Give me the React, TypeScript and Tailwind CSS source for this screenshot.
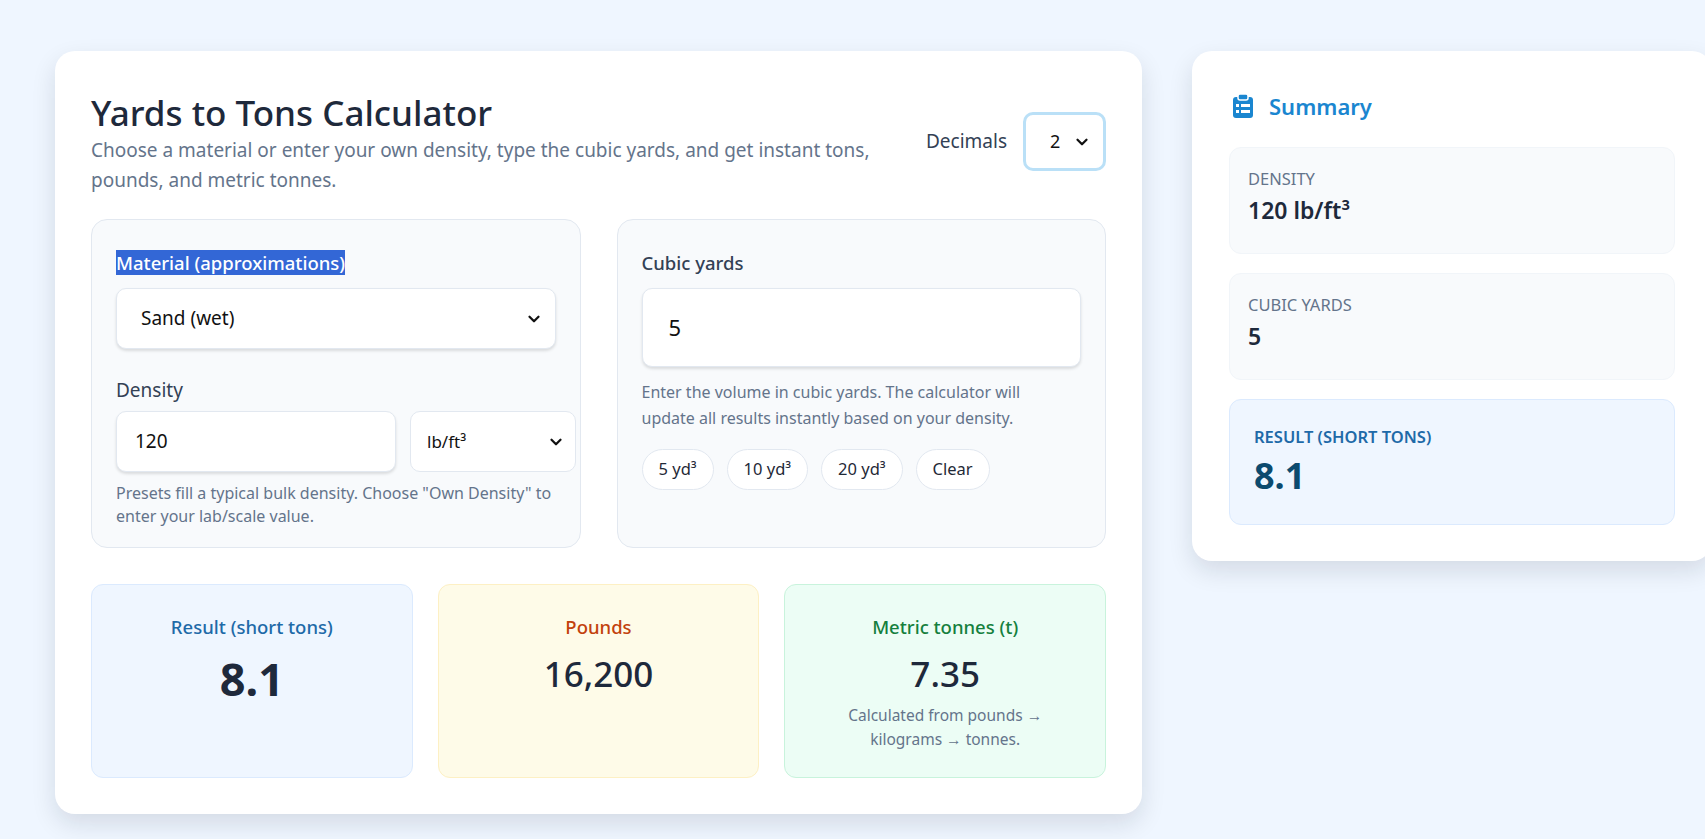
import React from "react";

const Chev = () => (
  <svg width="18" height="18" viewBox="0 0 24 24" fill="none" stroke="#111" strokeWidth="3" strokeLinecap="round" strokeLinejoin="round"><path d="M6 9l6 6 6-6" /></svg>
);

export default function App() {
  const chip = "h-[41px] px-4 rounded-full border border-[#e2e8f0] bg-white text-[16.5px] text-[#1f2937] flex items-center";
  return (
    <div className="w-[1705px] h-[839px] overflow-hidden bg-[#eff6ff] flex items-start pt-[51px] pl-[55px] gap-[50px]" style={{ fontFamily: '"Noto Sans","Open Sans",sans-serif' }}>
      <div className="w-[1087px] h-[763px] shrink-0 bg-white rounded-[20px] shadow-[0_10px_25px_rgba(15,23,42,0.12)] px-[36px] pt-[40px]">
        <div className="flex justify-between">
          <div>
            <h1 className="text-[35px] font-medium text-[#1e293b] leading-[44px]">Yards to Tons Calculator</h1>
            <p className="text-[19px] text-[#64748b] leading-[30px] w-[810px]">Choose a material or enter your own density, type the cubic yards, and get instant tons, pounds, and metric tonnes.</p>
          </div>
          <div className="flex items-center gap-4 mt-[21px] h-[59px]">
            <span className="text-[19px] text-[#334155]">Decimals</span>
            <div className="w-[83px] h-[59px] rounded-[10px] border-[3px] border-[#bae0f7] bg-white flex items-center justify-between px-[24px] pr-[12px]">
              <span className="text-[18px] text-[#111]">2</span><Chev />
            </div>
          </div>
        </div>
        <div className="grid grid-cols-2 gap-[36px] mt-[24px]">
          <div className="h-[329px] rounded-[16px] border border-[#e2e8f0] bg-[#f8fafc] pl-[24px] pr-[4px] pt-[30px]">
            <div className="text-[18.5px] font-medium leading-[26px]"><span className="bg-[#3367d6] text-white">Material (approximations)</span></div>
            <div className="mt-[12px] w-[440px] h-[61px] bg-white rounded-[10px] border border-[#e2e8f0] shadow-[0_2px_3px_rgba(0,0,0,0.12)] flex items-center justify-between pl-[24px] pr-[12px]">
              <span className="text-[19px] text-[#111]">Sand (wet)</span><Chev />
            </div>
            <div className="mt-[28px] text-[19px] text-[#334155] leading-[26px]">Density</div>
            <div className="flex gap-[14px] mt-[8px]">
              <div className="w-[281px] h-[61px] bg-white rounded-[10px] border border-[#e2e8f0] shadow-[0_2px_3px_rgba(0,0,0,0.12)] flex items-center pl-[18px] text-[19px] text-[#111]">120</div>
              <div className="w-[166px] h-[61px] bg-white rounded-[10px] border border-[#e2e8f0] flex items-center justify-between pl-[16px] pr-[10px]">
                <span className="text-[17px] text-[#111]">lb/ft³</span><Chev />
              </div>
            </div>
            <p className="mt-[10px] text-[16px] text-[#64748b] leading-[23px] w-[440px]">Presets fill a typical bulk density. Choose "Own Density" to enter your lab/scale value.</p>
          </div>
          <div className="h-[329px] rounded-[16px] border border-[#e2e8f0] bg-[#f8fafc] px-[24px] pt-[30px]">
            <div className="text-[18.5px] font-medium text-[#334155] leading-[26px]">Cubic yards</div>
            <div className="mt-[12px] h-[79px] bg-white rounded-[10px] border border-[#e2e8f0] shadow-[0_2px_3px_rgba(0,0,0,0.12)] flex items-center pl-[26px] text-[22px] text-[#111]">5</div>
            <p className="mt-[12px] text-[16px] text-[#64748b] leading-[26px] w-[410px]">Enter the volume in cubic yards. The calculator will update all results instantly based on your density.</p>
            <div className="flex gap-[13px] mt-[18px]">
              <div className={chip}>5 yd³</div>
              <div className={chip}>10 yd³</div>
              <div className={chip}>20 yd³</div>
              <div className={chip}>Clear</div>
            </div>
          </div>
        </div>
        <div className="grid grid-cols-3 gap-[25px] mt-[36px]">
          <div className="h-[194px] rounded-[12px] border border-[#dbeafe] bg-[#eff6ff] flex flex-col items-center pt-[28px]">
            <div className="text-[18.5px] font-medium text-[#1e6aa8]">Result (short tons)</div>
            <div className="text-[45px] font-bold text-[#1e293b] leading-[60px] mt-[8px]">8.1</div>
          </div>
          <div className="h-[194px] rounded-[12px] border border-[#fdf0c4] bg-[#fefbe8] flex flex-col items-center pt-[28px]">
            <div className="text-[18.5px] font-medium text-[#c2410c]">Pounds</div>
            <div className="text-[35px] font-medium text-[#1e293b] leading-[50px] mt-[8px]">16,200</div>
          </div>
          <div className="h-[194px] rounded-[12px] border border-[#c8f3dc] bg-[#ecfdf5] flex flex-col items-center pt-[28px]">
            <div className="text-[18.5px] font-medium text-[#15803d]">Metric tonnes (t)</div>
            <div className="text-[35px] font-medium text-[#1e293b] leading-[50px] mt-[8px]">7.35</div>
            <div className="text-[15.5px] text-[#64748b] leading-[24px] text-center mt-[4px]">Calculated from pounds →<br />kilograms → tonnes.</div>
          </div>
        </div>
      </div>
      <div className="w-[520px] shrink-0 h-[510px] bg-white rounded-[20px] shadow-[0_10px_25px_rgba(15,23,42,0.12)] px-[37px] pt-[40px]">
        <div className="flex items-center gap-[16px] h-[30px] pl-[4px]">
          <svg width="20" height="24" viewBox="0 0 20 24"><rect x="0" y="3" width="20" height="21" rx="3" fill="#1a86d0" /><rect x="5" y="0" width="10" height="6" rx="2" fill="#1a86d0" stroke="#fff" strokeWidth="1.5" /><rect x="3" y="10" width="3" height="3" fill="#fff" /><rect x="8" y="10" width="9" height="3" fill="#fff" /><rect x="3" y="16" width="3" height="3" fill="#fff" /><rect x="8" y="16" width="9" height="3" fill="#fff" /></svg>
          <span className="text-[22px] font-semibold text-[#1a86d0]">Summary</span>
        </div>
        <div className="mt-[26px] flex flex-col gap-[19px]">
          <div className="h-[107px] rounded-[12px] bg-[#f8fafc] border border-[#f1f5f9] px-[18px] pt-[20px]">
            <div className="text-[16.5px] text-[#64748b] leading-[22px]">DENSITY</div>
            <div className="text-[23px] font-semibold text-[#1e293b] leading-[36px] mt-[2px]">120 lb/ft³</div>
          </div>
          <div className="h-[107px] rounded-[12px] bg-[#f8fafc] border border-[#f1f5f9] px-[18px] pt-[20px]">
            <div className="text-[16.5px] text-[#64748b] leading-[22px]">CUBIC YARDS</div>
            <div className="text-[23px] font-semibold text-[#1e293b] leading-[36px] mt-[2px]">5</div>
          </div>
          <div className="h-[126px] rounded-[12px] bg-[#eff6ff] border border-[#dbeafe] px-[24px] pt-[26px]">
            <div className="text-[16.5px] font-semibold text-[#1e6aa8] leading-[22px]">RESULT (SHORT TONS)</div>
            <div className="text-[36px] font-bold text-[#0c4a6e] leading-[48px] mt-[4px]">8.1</div>
          </div>
        </div>
      </div>
    </div>
  );
}
